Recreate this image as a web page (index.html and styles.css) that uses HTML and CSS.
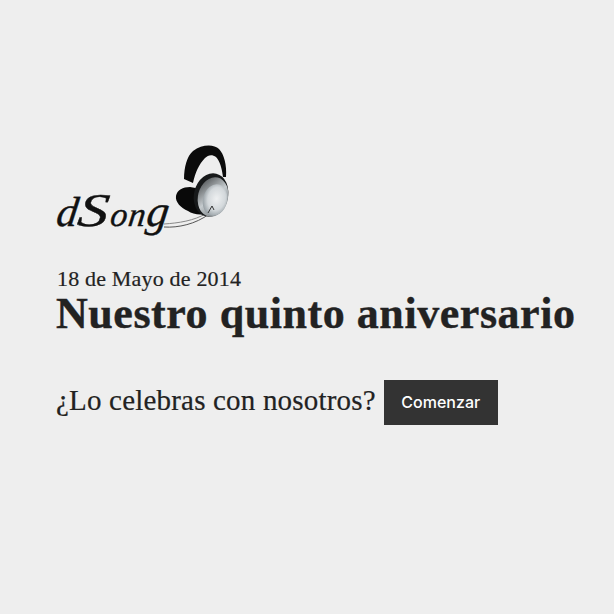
FILE: index.html
```html
<!DOCTYPE html>
<html lang="es">
<head>
<meta charset="utf-8">
<title>dSong</title>
<link rel="stylesheet" href="styles.css">
</head>
<body>
<main class="intro">
  <div class="logo">
    <span class="logo-word"><span class="logo-d">d</span><span class="logo-s">S</span><span class="logo-on">on</span><span class="logo-g">g</span></span>
    <svg class="logo-phones" width="176" height="100" viewBox="0 0 176 100" aria-hidden="true">
      <defs>
        <radialGradient id="cup" cx="0.55" cy="0.45" r="0.6">
          <stop offset="0" stop-color="#eef0f1"/>
          <stop offset="0.6" stop-color="#d3d8db"/>
          <stop offset="1" stop-color="#8f989d"/>
        </radialGradient>
        <linearGradient id="ring" x1="0" y1="0" x2="1" y2="1">
          <stop offset="0" stop-color="#3a3d3f"/>
          <stop offset="0.5" stop-color="#c5cbce"/>
          <stop offset="1" stop-color="#5b6165"/>
        </linearGradient>
      </defs>
      <path d="M108 81 C122 80 138 78 151 70" fill="none" stroke="#888" stroke-width="1"/>
      <path d="M108 84 C122 85 140 81 153 71" fill="none" stroke="#555" stroke-width="1"/>
      <path d="M128 36 C128 24 131 13 137 8 C146 1 158 1 163 6 C168 11 171 22 170 34 L167 34 C166 26 164 18 160 14 C156 11 152 12 149 15 C143 21 139 30 137 40 Z" fill="#0b0b0b"/>
      <path d="M120 53 C121 47 127 44 134 44 L145 46 L149 71 C143 72 136 71 132 68 C125 65 119 59 120 53 Z" fill="#090909"/>
      <ellipse cx="155" cy="52" rx="17" ry="22" transform="rotate(14 155 52)" fill="#17191a"/>
      <ellipse cx="157" cy="54" rx="15" ry="20" transform="rotate(14 157 54)" fill="url(#ring)"/>
      <ellipse cx="159" cy="57" rx="12" ry="16" transform="rotate(14 159 57)" fill="url(#cup)"/>
      <path d="M152 70 L156 63 L158 67" fill="none" stroke="#333" stroke-width="1"/>
    </svg>
  </div>
  <p class="date">18 de Mayo de 2014</p>
  <h1 class="title">Nuestro quinto aniversario</h1>
  <div class="cta">
    <span class="cta-text">¿Lo celebras con nosotros?</span>
    <a class="btn" href="#">Comenzar</a>
  </div>
</main>
</body>
</html>
```
FILE: styles.css
```css
html, body { margin: 0; padding: 0; }
body {
  background: #eeeeee;
  color: #222;
  font-family: "Liberation Serif", serif;
  height: 614px;
  overflow: hidden;
}
.intro { padding: 143px 0 0 56px; }
.logo { position: relative; width: 176px; height: 100px; }
.logo-word {
  position: absolute;
  left: -4px;
  top: 33px;
  display: flex;
  align-items: baseline;
  font-style: italic;
  line-height: 68px;
  color: #111;
  -webkit-text-stroke: 0.4px #111;
  transform: skewX(-8deg);
  transform-origin: left bottom;
}
.logo-d { font-size: 42px; }
.logo-s { font-size: 47px; width: 33px; transform: scaleX(1.3); transform-origin: left bottom; }
.logo-on { font-size: 34px; letter-spacing: 1px; }
.logo-g { font-size: 44px; }
.logo-phones { position: absolute; left: 0; top: 0; }
.date {
  margin: 21px 0 0;
  padding-left: 1px;
  font-size: 22px;
  line-height: 30px;
  letter-spacing: 0.18px;
  -webkit-text-stroke: 0.2px #222;
}
.title {
  margin: -2px 0 0;
  font-size: 44px;
  line-height: 44px;
  font-weight: 700;
  letter-spacing: 0.55px;
  -webkit-text-stroke: 0.4px #222;
  white-space: nowrap;
}
.cta { display: flex; align-items: center; gap: 8px; margin-top: 44px; }
.cta-text {
  margin-bottom: 4px;
  font-size: 29px;
  letter-spacing: 0.19px;
  -webkit-text-stroke: 0.2px #222;
  white-space: nowrap;
}
.btn {
  display: block;
  width: 114px;
  height: 45px;
  line-height: 45px;
  text-align: center;
  background: #333;
  color: #fff;
  font-family: "Inter", sans-serif;
  font-weight: 500;
  font-size: 16px;
  text-decoration: none;
}
```
